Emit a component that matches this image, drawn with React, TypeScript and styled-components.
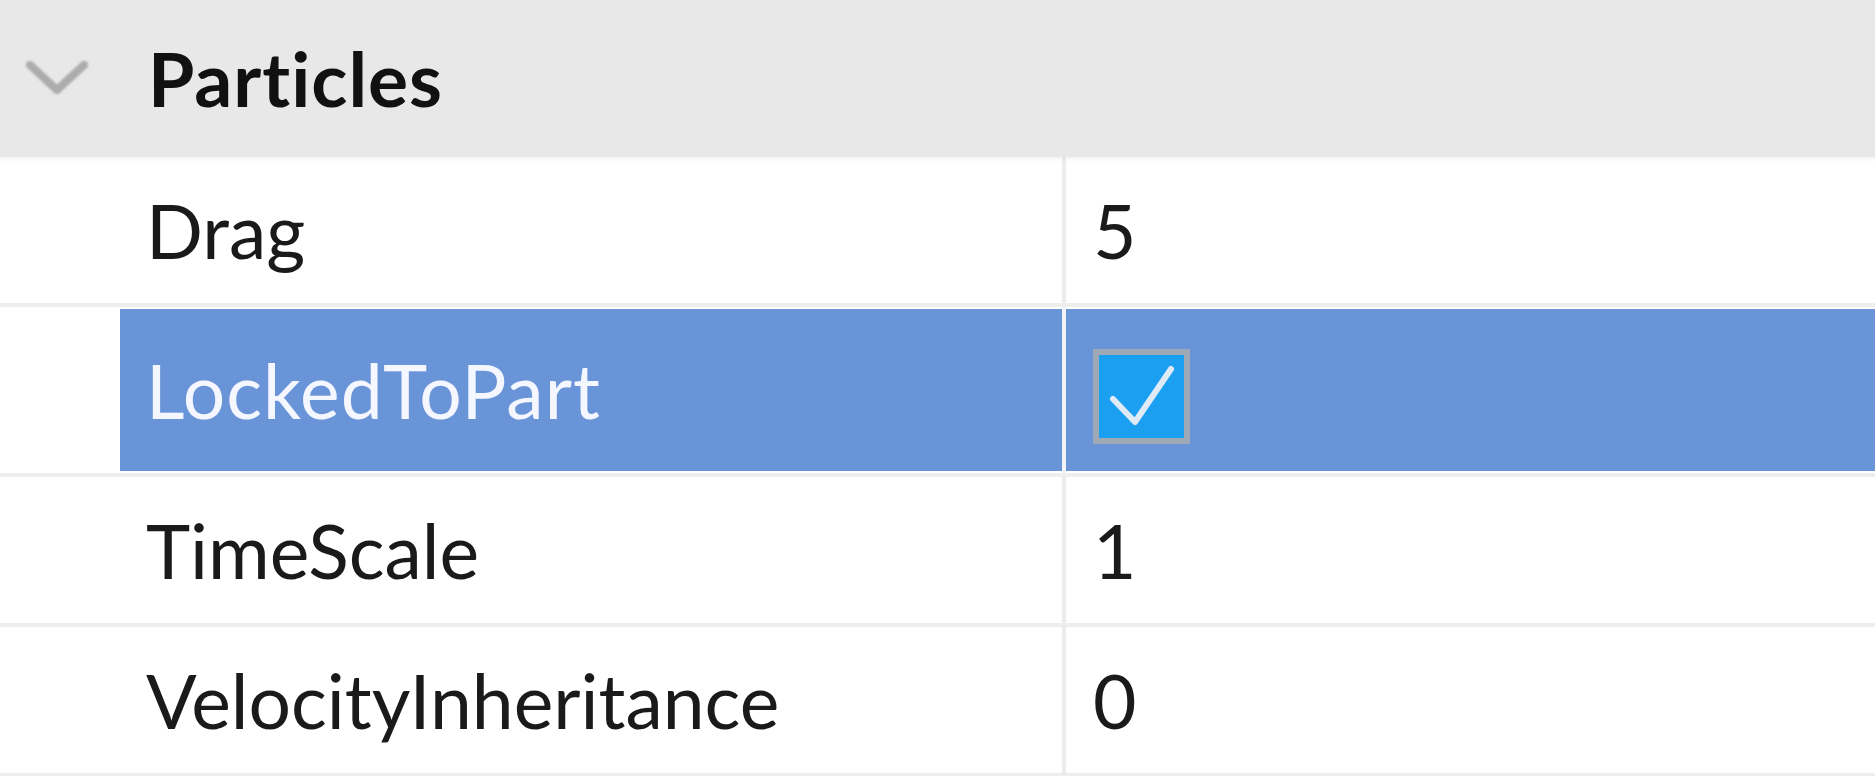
import React from "react";
import styled, { createGlobalStyle } from "styled-components";

const Global = createGlobalStyle`
  html, body { margin: 0; padding: 0; background: #ffffff; }
  body { width: 1875px; height: 776px; overflow: hidden; }
  #root { width: 1875px; height: 776px; }
`;

const Panel = styled.div`
  display: flex;
  flex-direction: column;
  width: 1875px;
  height: 776px;
  background: #ffffff;
  font-family: Lato, "Open Sans", sans-serif;
  font-variant-ligatures: none;
  font-feature-settings: "liga" 0, "clig" 0;
  color: #1a1a1a;
  overflow: hidden;
`;

const CategoryHeader = styled.div`
  display: flex;
  align-items: center;
  height: 157px;
  flex: none;
  background: #e8e8e8;
  box-shadow: 0 2px 4px rgba(0, 0, 0, 0.06);
  position: relative;
  z-index: 1;
`;

const ChevronSlot = styled.div`
  width: 148px;
  height: 100%;
  display: flex;
  align-items: center;
  padding-left: 24px;
  box-sizing: border-box;
  padding-bottom: 0;
`;

const CategoryTitle = styled.span`
  font-size: 75px;
  font-weight: 700;
  color: #111111;
  padding-bottom: 2px;
  letter-spacing: 1px;
`;

const Row = styled.div<{ $tall?: boolean }>`
  display: flex;
  height: ${(p) => (p.$tall ? 166 : 146)}px;
  flex: none;
  border-bottom: 4px solid #eeeeee;
`;

const Indent = styled.div`
  width: 120px;
  flex: none;
  background: #ffffff;
`;

const NameCell = styled.div<{ $selected?: boolean }>`
  width: 942px;
  flex: none;
  display: flex;
  align-items: center;
  padding-left: 26px;
  box-sizing: border-box;
  font-size: 75px;
  letter-spacing: ${(p) => (p.$selected ? "1px" : "0")};
  background: ${(p) => (p.$selected ? "#6a94d8" : "#ffffff")};
  color: ${(p) => (p.$selected ? "#f4f7ff" : "#1a1a1a")};
  margin: ${(p) => (p.$selected ? "2px 0 2px 0" : "0")};
`;

const ColumnDivider = styled.div<{ $selected?: boolean }>`
  width: 4px;
  flex: none;
  background: ${(p) => (p.$selected ? "#f2f4fa" : "#ececec")};
`;

const ValueCell = styled.div<{ $selected?: boolean }>`
  flex: 1;
  display: flex;
  align-items: center;
  padding-left: 27px;
  box-sizing: border-box;
  font-size: 75px;
  background: ${(p) => (p.$selected ? "#6a94d8" : "#ffffff")};
  margin: ${(p) => (p.$selected ? "2px 0 2px 0" : "0")};
`;

const CheckBox = styled.div`
  width: 97px;
  height: 95px;
  box-sizing: border-box;
  border: 6px solid #9ea9b6;
  background: #1b9ff1;
  display: flex;
  align-items: center;
  justify-content: center;
  margin-top: 12px;
`;

const Chevron = () => (
  <svg width="66" height="40" viewBox="0 0 66 40" style={{ filter: "blur(1px)" }}>
    <path
      d="M6 6 L33 31 L60 6"
      fill="none"
      stroke="#acacac"
      strokeWidth="8"
      strokeLinecap="round"
      strokeLinejoin="round"
    />
  </svg>
);

const Check = () => (
  <svg width="85" height="83" viewBox="0 0 85 83">
    <path
      d="M14 44 L36 67 L72 14"
      fill="none"
      stroke="#dfeaf7"
      strokeWidth="6"
      strokeLinecap="round"
      strokeLinejoin="round"
    />
  </svg>
);

type Prop = { name: string; value: string | boolean; selected?: boolean };

const props: Prop[] = [
  { name: "Drag", value: "5" },
  { name: "LockedToPart", value: true, selected: true },
  { name: "TimeScale", value: "1" },
  { name: "VelocityInheritance", value: "0" },
];

export default function App() {
  return (
    <>
      <Global />
      <Panel>
        <CategoryHeader>
          <ChevronSlot>
            <Chevron />
          </ChevronSlot>
          <CategoryTitle>Particles</CategoryTitle>
        </CategoryHeader>
        {props.map((p) => (
          <Row key={p.name} $tall={p.selected}>
            <Indent />
            <NameCell $selected={p.selected}>{p.name}</NameCell>
            <ColumnDivider $selected={p.selected} />
            <ValueCell $selected={p.selected}>
              {typeof p.value === "boolean" ? (
                <CheckBox>{p.value && <Check />}</CheckBox>
              ) : (
                p.value
              )}
            </ValueCell>
          </Row>
        ))}
      </Panel>
    </>
  );
}
